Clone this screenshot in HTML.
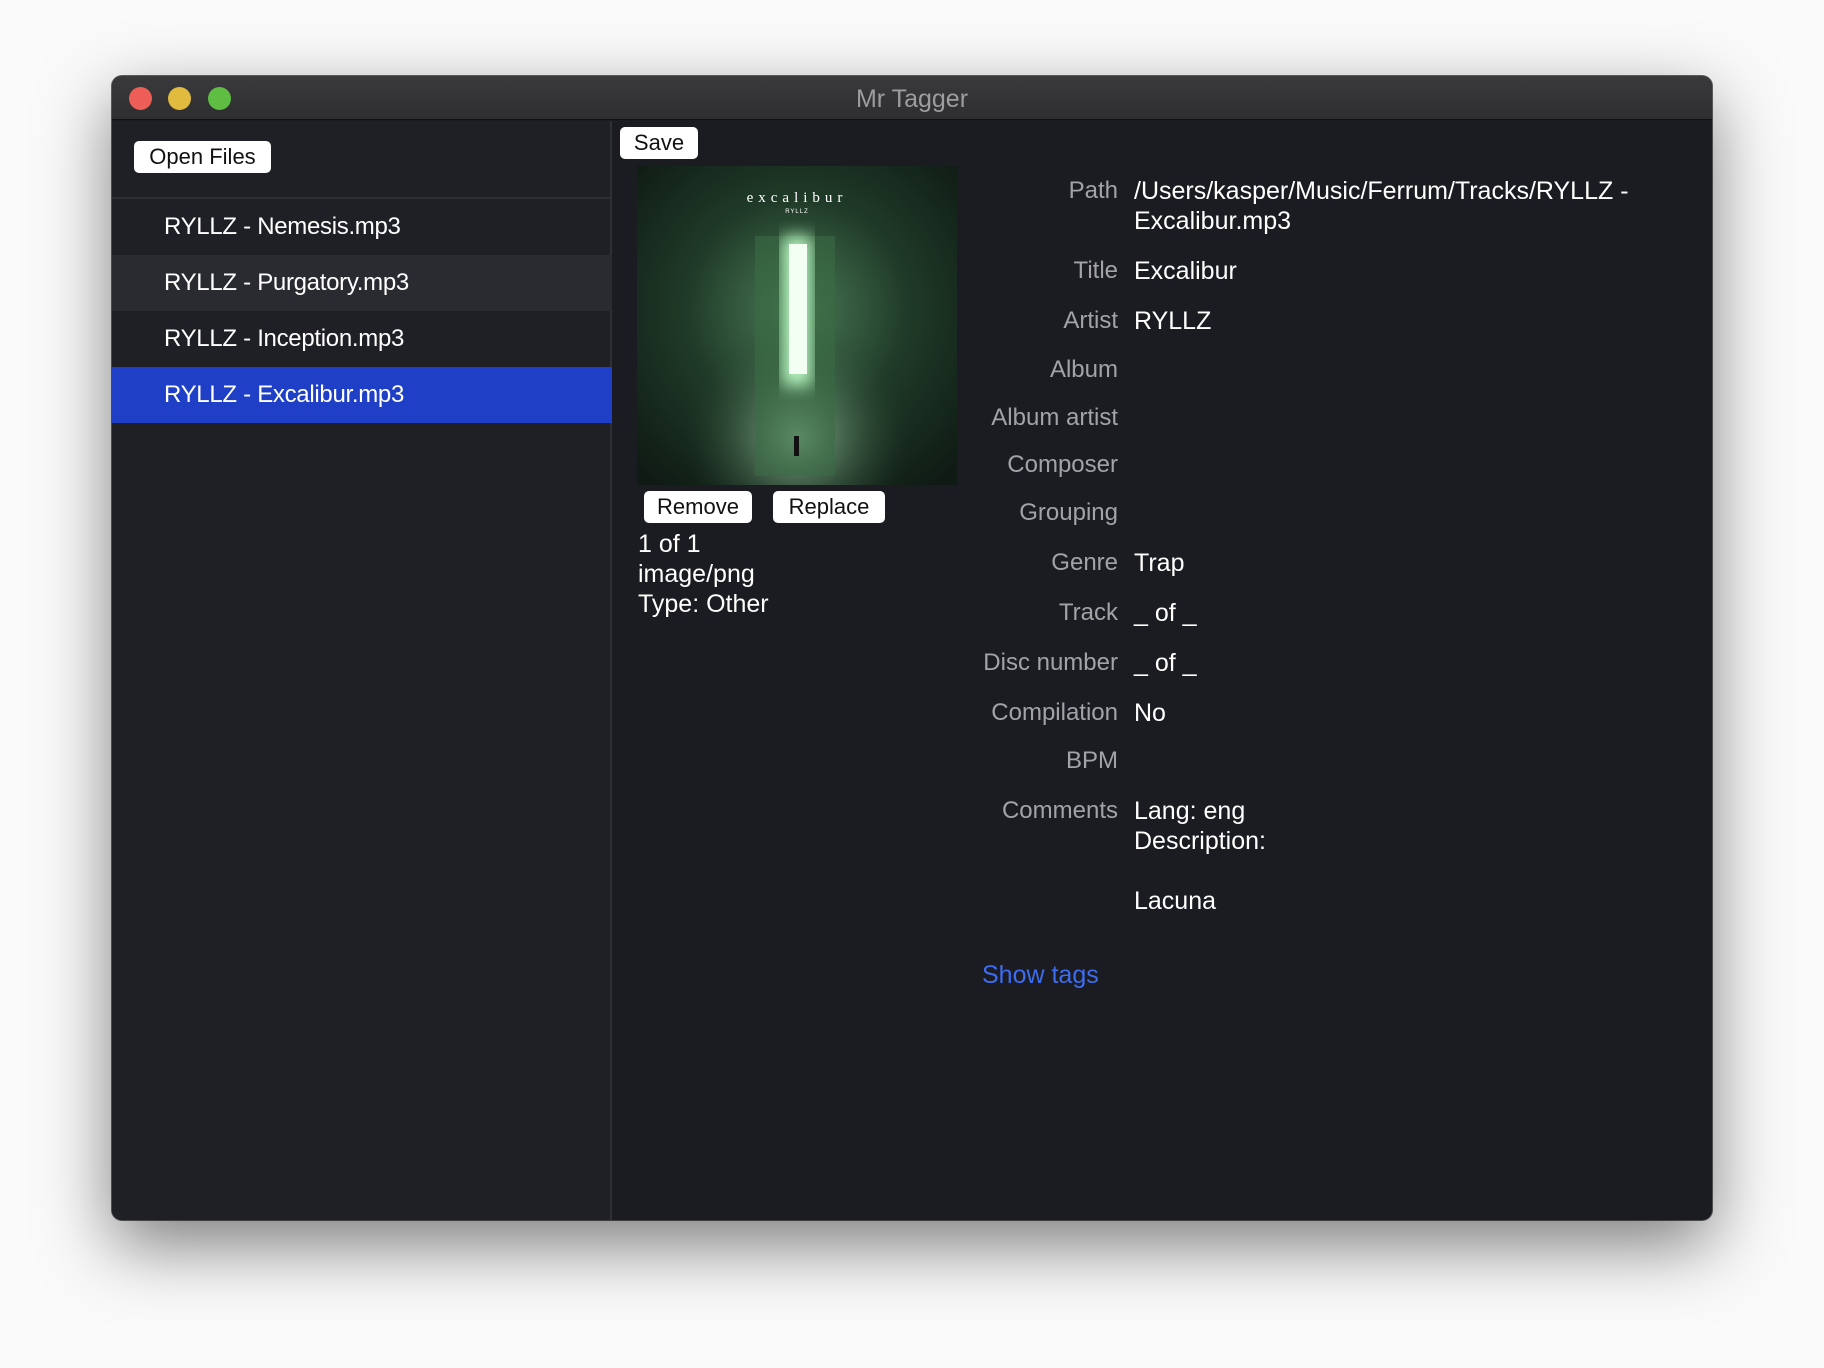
<!DOCTYPE html>
<html><head><meta charset="utf-8"><style>
*{margin:0;padding:0;box-sizing:border-box}
body{width:1824px;height:1368px;background:#fafafa;font-family:"Liberation Sans",Arial,sans-serif;position:relative;overflow:hidden}
.win{position:absolute;left:112px;top:76px;width:1600px;height:1144px;border-radius:10px;background:#1b1c21;box-shadow:0 25px 70px rgba(0,0,0,.5),0 0 0 1px rgba(0,0,0,.6);overflow:hidden}
.tb{position:absolute;left:0;top:0;width:1600px;height:44px;background:linear-gradient(#3a3a3c,#2e2e30);border-bottom:1px solid #111;}
.tb .t{position:absolute;width:100%;text-align:center;top:9px;color:#9d9d9f;font-size:25px}
.dot{position:absolute;top:11px;width:23px;height:23px;border-radius:50%}
.side{position:absolute;left:0;top:45px;width:500px;height:1100px;background:#1f2026;border-right:2px solid #2f3036}
.btn{position:absolute;background:#fff;border-radius:5px;color:#111;font-size:22px;text-align:center;line-height:32px;height:32px}
.sep{position:absolute;left:0;top:76px;width:500px;height:2px;background:#2f3036}
.row{position:absolute;left:0;width:500px;height:56px;line-height:56px;padding-left:52px;color:#fff;font-size:24px;letter-spacing:-0.3px}
.lbl{position:absolute;right:594px;color:#a2a3a7;font-size:24px;line-height:30px;text-align:right;white-space:nowrap}
.val{position:absolute;left:1022px;color:#fff;font-size:25px;line-height:30px;white-space:nowrap}
.info{position:absolute;left:526px;color:#fff;font-size:25px;line-height:30px}
</style></head><body>
<div class="win">
 <div class="tb">
  <div class="dot" style="left:17px;background:#ed5f56"></div>
  <div class="dot" style="left:56px;background:#e0bb3e"></div>
  <div class="dot" style="left:96px;background:#5fbd44"></div>
  <div class="t">Mr Tagger</div>
 </div>
 <div class="side">
  <div class="btn" style="left:22px;top:20px;width:137px">Open Files</div>
  <div class="sep"></div>
  <div class="row" style="top:78px">RYLLZ - Nemesis.mp3</div>
  <div class="row" style="top:134px;background:#2a2b31">RYLLZ - Purgatory.mp3</div>
  <div class="row" style="top:190px">RYLLZ - Inception.mp3</div>
  <div class="row" style="top:246px;background:#1f40c6">RYLLZ - Excalibur.mp3</div>
 </div>
 <div class="btn" style="left:508px;top:51px;width:78px">Save</div>
 <svg style="position:absolute;left:525px;top:90px" width="320" height="319" viewBox="0 0 320 319">
  <defs>
   <radialGradient id="g" cx="0.5" cy="0.45" r="0.7"><stop offset="0" stop-color="#4a7a55"/><stop offset="0.5" stop-color="#1f3a28"/><stop offset="1" stop-color="#0f1a14"/></radialGradient>
   <radialGradient id="f" cx="0.5" cy="0.85" r="0.35"><stop offset="0" stop-color="#a8d8b0" stop-opacity=".8"/><stop offset="1" stop-color="#2a4a32" stop-opacity="0"/></radialGradient>
   <filter id="b"><feGaussianBlur stdDeviation="8"/></filter>
  </defs>
  <rect width="320" height="319" fill="url(#g)"/>
  <rect width="320" height="319" fill="url(#f)"/>
  <rect x="118" y="70" width="80" height="240" fill="#3b6a45" opacity=".6"/>
  <rect x="145" y="70" width="30" height="150" fill="#b6f5c0" filter="url(#b)"/>
  <rect x="152" y="78" width="18" height="130" fill="#f2fff2"/>
  <rect x="157" y="270" width="5" height="20" fill="#111"/>
  <text x="160" y="36" fill="#fff" font-size="15" text-anchor="middle" font-family="Liberation Serif" letter-spacing="5">excalibur</text>
  <text x="160" y="47" fill="#fff" font-size="6" text-anchor="middle" letter-spacing="1">RYLLZ</text>
 </svg>
 <div class="btn" style="left:532px;top:415px;width:108px">Remove</div>
 <div class="btn" style="left:661px;top:415px;width:112px">Replace</div>
 <div class="info" style="top:453px">1 of 1<br>image/png<br>Type: Other</div>

 <div class="lbl" style="top:100px">Path</div><div class="val" style="top:100px">/Users/kasper/Music/Ferrum/Tracks/RYLLZ -<br>Excalibur.mp3</div>
 <div class="lbl" style="top:180px">Title</div><div class="val" style="top:180px">Excalibur</div>
 <div class="lbl" style="top:230px">Artist</div><div class="val" style="top:230px">RYLLZ</div>
 <div class="lbl" style="top:279px">Album</div>
 <div class="lbl" style="top:327px">Album artist</div>
 <div class="lbl" style="top:374px">Composer</div>
 <div class="lbl" style="top:422px">Grouping</div>
 <div class="lbl" style="top:472px">Genre</div><div class="val" style="top:472px">Trap</div>
 <div class="lbl" style="top:522px">Track</div><div class="val" style="top:522px">_ of _</div>
 <div class="lbl" style="top:572px">Disc number</div><div class="val" style="top:572px">_ of _</div>
 <div class="lbl" style="top:622px">Compilation</div><div class="val" style="top:622px">No</div>
 <div class="lbl" style="top:670px">BPM</div>
 <div class="lbl" style="top:720px">Comments</div><div class="val" style="top:720px">Lang: eng<br>Description:<br><br>Lacuna</div>
 <div style="position:absolute;left:870px;top:884px;color:#3d6cf0;font-size:25px;line-height:30px">Show tags</div>
</div>
</body></html>
